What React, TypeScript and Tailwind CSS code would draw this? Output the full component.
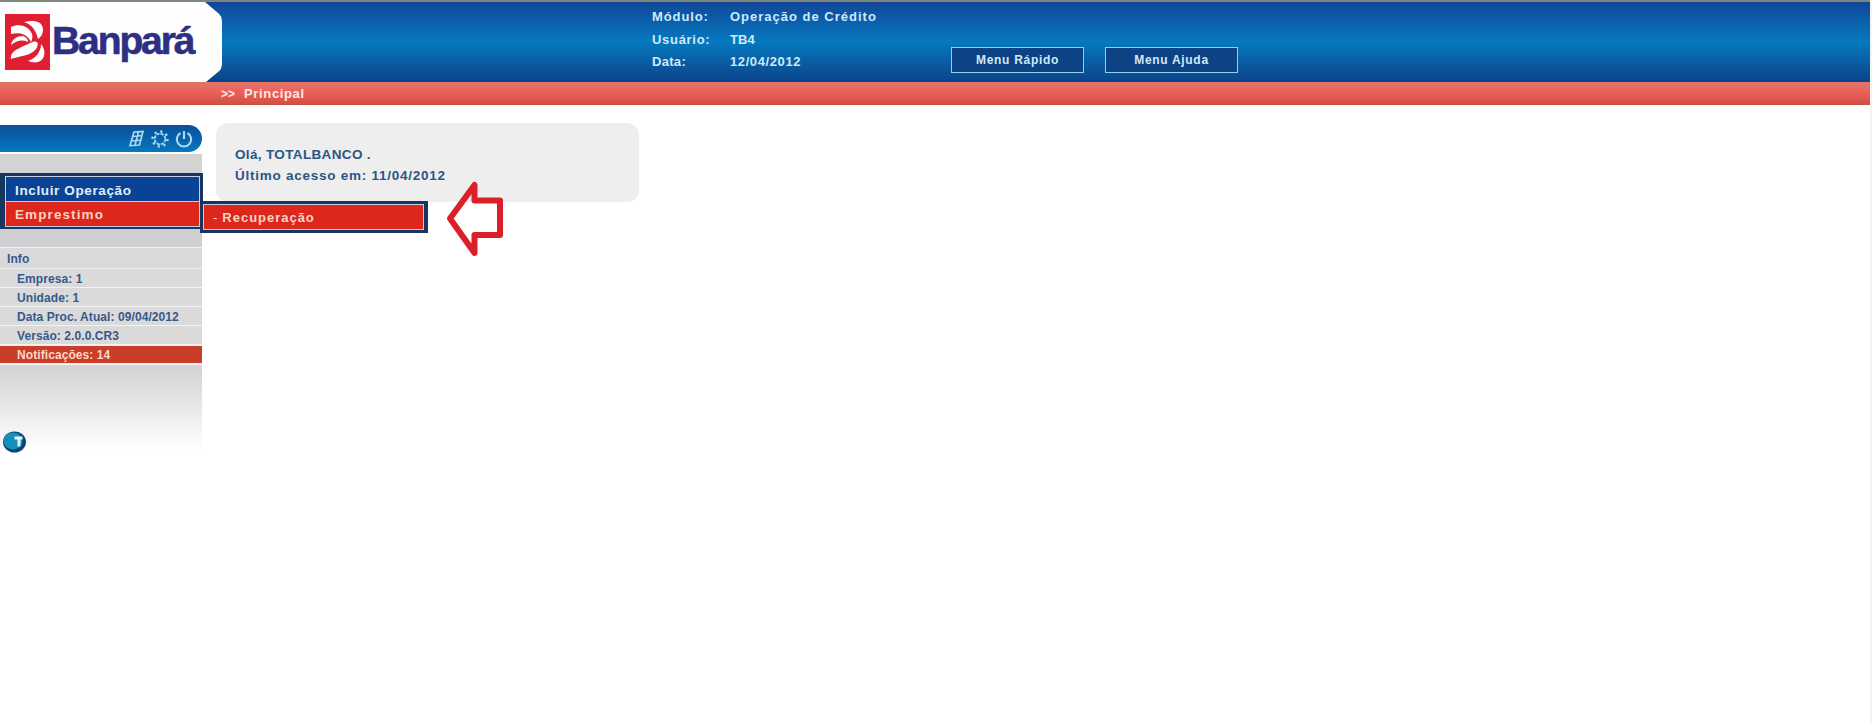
import React from "react";

const infoRows = ["Empresa: 1", "Unidade: 1", "Data Proc. Atual: 09/04/2012", "Versão: 2.0.0.CR3"];

function BanparaMark() {
  return (
    <svg width="45" height="56" viewBox="0 0 45 56" className="block shrink-0">
      <rect width="45" height="56" fill="#e01f33" />
      <path d="M6 13 C14 9 24 12 27 20 C28 23 27 26 26 28 C22 20 15 18 6 20Z" fill="#fff" />
      <path d="M19 8 C29 6 37 7 38 15 C38 20 36 23 33 25 C31 17 28 11 19 8Z" fill="#fff" />
      <path d="M6 31 C7 25 12 22 18 22 C21 23 23 25 23 28 C17 25 11 27 6 31Z" fill="#fff" />
      <path d="M6 45 C5 36 16 34 25 29 C32 25 35 29 31 35 C26 42 14 42 6 45Z" fill="#fff" />
      <path d="M23 47 C31 44 36 38 36 30 C41 35 41 46 33 48 C30 49 26 48 23 47Z" fill="#fff" />
    </svg>
  );
}

function Header() {
  return (
    <header className="w-[1870px]">
      <div className="h-[2px] bg-[#7d8679]" />
      <div className="flex h-[80px] bg-linear-to-b from-[#10479a] via-[#0579be] to-[#0b4389]">
        <div className="relative h-[80px] w-[223px] shrink-0">
          <svg width="223" height="80" className="absolute inset-0">
            <path d="M0 0H205L218 11Q222 14 222 20V62Q222 67 218 70L206 80H0Z" fill="#fefefe" />
          </svg>
          <div className="relative flex pl-[5px] pt-[12px]">
            <BanparaMark />
            <span className="mt-[1px] ml-[2px] inline-block whitespace-nowrap text-[39px] leading-[52px] font-bold tracking-[-2.1px] text-[#2d2f83] [-webkit-text-stroke:0.6px_#2d2f83]">
              Banpará
            </span>
          </div>
        </div>
        <dl className="ml-[429px] grid w-[299px] grid-cols-[78px_1fr] content-start pt-[4px] text-[13px] leading-[22.7px] font-bold text-[#cdeafa]">
          <dt className="tracking-[0.9px]">Módulo:</dt>
          <dd className="tracking-[1px]">Operação de Crédito</dd>
          <dt className="tracking-[0.7px]">Usuário:</dt>
          <dd className="tracking-[0.1px]">TB4</dd>
          <dt className="tracking-[0.3px]">Data:</dt>
          <dd className="tracking-[0.6px]">12/04/2012</dd>
        </dl>
        <nav className="flex gap-[21px] pt-[45px] text-[12px] font-bold tracking-[0.7px] text-[#cdeafa]">
          <button className="h-[26px] w-[133px] border-[1.5px] border-[#8fd0ea] bg-[#0d4285]">Menu Rápido</button>
          <button className="h-[26px] w-[133px] border-[1.5px] border-[#8fd0ea] bg-[#0d4285]">Menu Ajuda</button>
        </nav>
      </div>
      <div className="flex h-[23px] items-center bg-linear-to-b from-[#e3766b] via-[#ea5853] via-60% to-[#c75240] pl-[221px] text-[13px] font-bold text-[#fde9e4]">
        <span className="w-[23px] text-[12px]">&gt;&gt;</span>
        <span className="tracking-[0.65px]">Principal</span>
      </div>
    </header>
  );
}

function Toolbar() {
  return (
    <div className="flex h-[27px] w-[202px] items-center justify-end gap-[5px] rounded-r-full bg-linear-to-b from-[#0b4f98] via-[#0663ad] to-[#0878bd] pr-[9px] text-[#a9d8ef]">
      <svg width="17" height="17" viewBox="0 0 17 17" fill="none" stroke="currentColor" strokeWidth="1.7">
        <path d="M6 2 15 1.500 11.500 15 2 15.500Z M4 11 13 10 M5 6.500 14 5.500 M10.500 2 7 15" />
      </svg>
      <svg width="20" height="18" viewBox="0 0 20 18" fill="none" stroke="currentColor">
        <circle cx="10" cy="9" r="5.300" strokeWidth="1.800" strokeDasharray="3.160 1" />
        <circle cx="10" cy="9" r="7.500" strokeWidth="2.400" strokeDasharray="2.200 3.690" />
      </svg>
      <svg width="18" height="18" viewBox="0 0 18 18" fill="none" stroke="currentColor" strokeWidth="2.200">
        <path d="M5.500 3A7.200 7.200 0 1 0 12.500 3M9 1V9" />
      </svg>
    </div>
  );
}

function Sidebar() {
  return (
    <aside className="w-[202px] shrink-0 pt-[20px]">
      <Toolbar />
      <div className="mt-[2px]">
        <div className="h-[19px] bg-[#d3d3d3]" />
        <div className="h-[56px] w-[203px] bg-[#17365f] pt-[3px] pr-[3px] pb-[2px] pl-[5px] font-bold">
          <div className="h-[51px] border border-[#c3cee2]">
            <div className="h-[24px] bg-[#0a4396] pl-[9px] text-[13.5px] leading-[27px] tracking-[0.63px] text-[#e1f0fa]">Incluir Operação</div>
            <div className="h-[25px] border-t border-[#c3cee2] bg-[#dd261c] pl-[9px] text-[13.5px] leading-[25px] tracking-[1.1px] text-[#fbd3c2]">Emprestimo</div>
          </div>
        </div>
        <div className="h-[18px] bg-[#cfcfd3]" />
        <div className="bg-[#f0f0f0] text-[12px] font-bold tracking-[0.08px] text-[#36598c]">
          <div className="h-[22px] border-y-[1.5px] border-[#f0f0f0] bg-[#dadada] pl-[7px] leading-[22px]">Info</div>
          {infoRows.map((row) => (
            <div key={row} className="h-[19px] border-b border-[#f2f2f2] bg-[#dadada] pl-[17px] leading-[20px]">
              {row}
            </div>
          ))}
          <div className="pt-[1px] pb-[2px]">
            <div className="h-[17px] bg-[#cb3d2b] pl-[17px] leading-[18px] text-[#fbd9c8]">Notificações: 14</div>
          </div>
        </div>
        <div className="h-[86px] bg-linear-to-b from-[#d3d3d3] to-white pt-[66px] pl-[2px]">
          <svg width="25" height="22" viewBox="0 0 25 22">
            <ellipse cx="12.500" cy="11" rx="11.500" ry="10.500" fill="#0d4476" />
            <ellipse cx="11" cy="10" rx="9.500" ry="8.500" fill="#1490bd" />
            <path d="M12.500 5.500H20.500V8.500H18.500V15.500H15.500V8.500H12.500Z" fill="#e4f5fa" />
          </svg>
        </div>
      </div>
    </aside>
  );
}

export default function App() {
  return (
    <div className="relative h-[723px] w-[1875px] overflow-hidden bg-white font-['Liberation_Sans',Arial,sans-serif]">
      <Header />
      <div className="flex">
        <Sidebar />
        <main className="pt-[18px] pl-[14px]">
          <section className="h-[79px] w-[423px] rounded-[12px] bg-[#eeeeee] pt-[21px] pl-[19px] text-[13.5px] leading-[21px] font-bold text-[#2b5585]">
            <p className="tracking-[0.35px]">Olá, TOTALBANCO .</p>
            <p className="tracking-[0.75px]">Último acesso em: 11/04/2012</p>
          </section>
        </main>
      </div>
      <div className="absolute top-[201px] left-[200px] h-[32px] w-[228px] bg-[#17365f] p-[3px] pr-[4px]">
        <div className="h-[26px] border-[1.5px] border-[#c3cee2] bg-[#dd261c] pl-[9px] text-[13px] leading-[26px] font-bold text-[#fbd3c2]">
          <span className="mr-[5px] font-normal">-</span>
          <span className="tracking-[0.98px]">Recuperação</span>
        </div>
      </div>
      <svg className="absolute top-[178px] left-[444px]" width="64" height="82" viewBox="0 0 64 82" fill="none" stroke="#dc2029" strokeWidth="6" strokeLinejoin="round">
        <path d="M6 40.500 30.500 7V22.500H56V57H30.500V75Z" />
      </svg>
      <div className="absolute top-0 left-[1870px] h-full w-[2px] bg-[#f4f5ef]" />
    </div>
  );
}
